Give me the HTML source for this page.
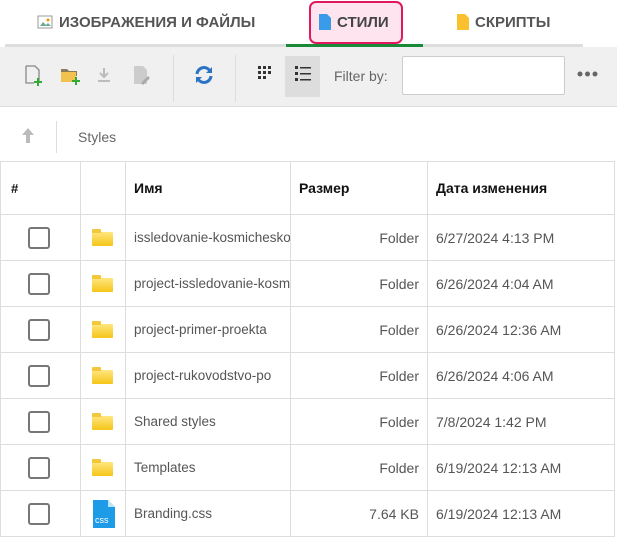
<!DOCTYPE html>
<html><head><meta charset="utf-8"><style>
*{box-sizing:border-box;margin:0;padding:0}
body{width:617px;height:537px;overflow:hidden;background:#fff;font-family:"Liberation Sans","DejaVu Sans",sans-serif;color:#333;position:relative}
.abs{position:absolute}
.tab{position:absolute;top:9px;font-size:15px;font-weight:bold;color:#555;display:flex;align-items:center;gap:6px;height:26px}
.tb{background:#f0f0f0;position:absolute;left:0;top:47px;width:617px;height:60px;border-bottom:1px solid #ddd}
table{position:absolute;left:0;top:161px;border-collapse:collapse;width:615px;font-size:14px;table-layout:fixed}
td,th{border:1px solid #ddd;height:46px;padding:0 8px;white-space:nowrap;overflow:hidden}
th{height:53px;text-align:left;font-weight:bold;color:#111;font-size:14px}
td{color:#555}
.cb{width:22px;height:22px;border:2px solid #777;border-radius:3px;margin-left:19px}
.fd{width:21px;height:14px;background:linear-gradient(#ffe680,#f5c518);border-radius:1px;position:relative;margin-left:3px;margin-top:3px}
.fd:before{content:"";position:absolute;left:0;top:-3px;width:9px;height:4px;background:#f3c73a;border-radius:1px 1px 0 0}
.name{text-overflow:clip;font-size:13.5px}
</style></head><body>
<div class="tab" style="left:37px"><svg width="16" height="16"><rect x="1" y="2" width="14" height="12" fill="#fff" stroke="#999"/><path d="M3 12l3-4 3 3 2-2 3 3z" fill="#6a9"/><circle cx="11" cy="6" r="1.5" fill="#e90"/></svg>ИЗОБРАЖЕНИЯ И ФАЙЛЫ</div>
<div class="abs" style="left:309px;top:1px;width:94px;height:43px;background:#fde4ee;border:2px solid #e0195e;border-radius:7px"></div>
<div class="tab" style="left:319px;color:#444"><svg width="12" height="16"><path d="M0 0h8l4 4v12H0z" fill="#3a9be8"/></svg>СТИЛИ</div>
<div class="tab" style="left:457px"><svg width="12" height="16"><path d="M0 0h8l4 4v12H0z" fill="#fbc02d"/></svg>СКРИПТЫ</div>
<div class="abs" style="left:5px;top:44px;width:578px;height:3px;background:#ddd"></div>
<div class="abs" style="left:286px;top:44px;width:137px;height:3px;background:#1a8a3a"></div>
<div class="tb">
<svg class="abs" style="left:25px;top:18px" width="18" height="22"><path d="M1 1h9l4 4v11" fill="none" stroke="#888" stroke-width="1.3"/><path d="M1 1v17h8" fill="none" stroke="#888" stroke-width="1.3"/><path d="M13 13v8M9 17h8" stroke="#3a3" stroke-width="2"/></svg>
<svg class="abs" style="left:61px;top:19px" width="20" height="20"><path d="M0 3h6l2 2h8v5H0z" fill="#8a7a5a"/><path d="M0 6h15v10H0z" fill="#f2c14e"/><path d="M15 11v8M11 15h8" stroke="#3a3" stroke-width="2"/></svg>
<svg class="abs" style="left:96px;top:20px" width="16" height="16"><path d="M8 1v9M4 6l4 4 4-4M2 14h12" stroke="#bbb" stroke-width="2" fill="none"/></svg>
<svg class="abs" style="left:133px;top:18px" width="18" height="22"><path d="M1 1h9l4 4v14H1z" fill="#ccc"/><path d="M8 18l7-7 2 2-7 7z" fill="#aaa"/></svg>
<div class="abs" style="left:173px;top:8px;width:1px;height:47px;background:#ddd"></div>
<svg class="abs" style="left:193px;top:17px" width="22" height="22"><path d="M4 10a7 7 0 0 1 13-3" stroke="#2b74c4" stroke-width="3" fill="none"/><path d="M19 3v6h-6z" fill="#2b74c4"/><path d="M18 12a7 7 0 0 1-13 3" stroke="#2b74c4" stroke-width="3" fill="none"/><path d="M3 19v-6h6z" fill="#2b74c4"/></svg>
<div class="abs" style="left:235px;top:8px;width:1px;height:47px;background:#ddd"></div>
<svg class="abs" style="left:258px;top:19px" width="16" height="16"><g fill="#333"><rect x="0" y="0" width="3" height="3"/><rect x="5" y="0" width="3" height="3"/><rect x="10" y="0" width="3" height="3"/><rect x="0" y="5" width="3" height="3"/><rect x="5" y="5" width="3" height="3"/><rect x="10" y="5" width="3" height="3"/><rect x="0" y="10" width="3" height="3"/><rect x="5" y="10" width="3" height="3"/></g></svg>
<div class="abs" style="left:285px;top:9px;width:35px;height:41px;background:#ddd"></div>
<svg class="abs" style="left:295px;top:19px" width="16" height="16"><g fill="#333"><rect x="0" y="0" width="3" height="3"/><rect x="5" y="1" width="11" height="1.5"/><rect x="0" y="6" width="3" height="3"/><rect x="5" y="7" width="11" height="1.5"/><rect x="0" y="12" width="3" height="3"/><rect x="5" y="13" width="11" height="1.5"/></g></svg>
<div class="abs" style="left:334px;top:21px;font-size:14px;color:#666">Filter by:</div>
<div class="abs" style="left:402px;top:9px;width:163px;height:39px;background:#fff;border:1px solid #ccc;border-radius:2px"></div>
<svg class="abs" style="left:577px;top:24px" width="22" height="6"><g fill="#666"><circle cx="3" cy="3" r="2.5"/><circle cx="10.5" cy="3" r="2.5"/><circle cx="18" cy="3" r="2.5"/></g></svg>
</div>
<svg class="abs" style="left:20px;top:127px" width="16" height="18"><path d="M8 1l6 7h-4v8H6V8H2z" fill="#bbb"/></svg>
<div class="abs" style="left:56px;top:121px;width:1px;height:32px;background:#ddd"></div>
<div class="abs" style="left:78px;top:129px;font-size:14px;color:#666">Styles</div>
<table>
<colgroup><col style="width:80px"><col style="width:45px"><col style="width:165px"><col style="width:137px"><col></colgroup>
<tr><th style="font-size:13px;padding-left:10px">#</th><th></th><th>Имя</th><th>Размер</th><th>Дата изменения</th></tr>
<tr><td><div class="cb"></div></td><td><div class="fd"></div></td><td class="name">issledovanie-kosmicheskogo</td><td style="text-align:right">Folder</td><td>6/27/2024 4:13 PM</td></tr>
<tr><td><div class="cb"></div></td><td><div class="fd"></div></td><td class="name">project-issledovanie-kosmos</td><td style="text-align:right">Folder</td><td>6/26/2024 4:04 AM</td></tr>
<tr><td><div class="cb"></div></td><td><div class="fd"></div></td><td class="name">project-primer-proekta</td><td style="text-align:right">Folder</td><td>6/26/2024 12:36 AM</td></tr>
<tr><td><div class="cb"></div></td><td><div class="fd"></div></td><td class="name">project-rukovodstvo-po</td><td style="text-align:right">Folder</td><td>6/26/2024 4:06 AM</td></tr>
<tr><td><div class="cb"></div></td><td><div class="fd"></div></td><td class="name">Shared styles</td><td style="text-align:right">Folder</td><td>7/8/2024 1:42 PM</td></tr>
<tr><td><div class="cb"></div></td><td><div class="fd"></div></td><td class="name">Templates</td><td style="text-align:right">Folder</td><td>6/19/2024 12:13 AM</td></tr>
<tr><td><div class="cb"></div></td><td><svg width="24" height="30" style="display:block;margin-left:3px"><path d="M1 1h15l7 7v21H1z" fill="#1e9be6"/><path d="M16 1v7h7z" fill="#bfe3fa"/><text x="3" y="24" font-size="9" fill="#fff" font-family="Liberation Sans">css</text></svg></td><td class="name">Branding.css</td><td style="text-align:right">7.64 KB</td><td>6/19/2024 12:13 AM</td></tr>
</table>
</body></html>
